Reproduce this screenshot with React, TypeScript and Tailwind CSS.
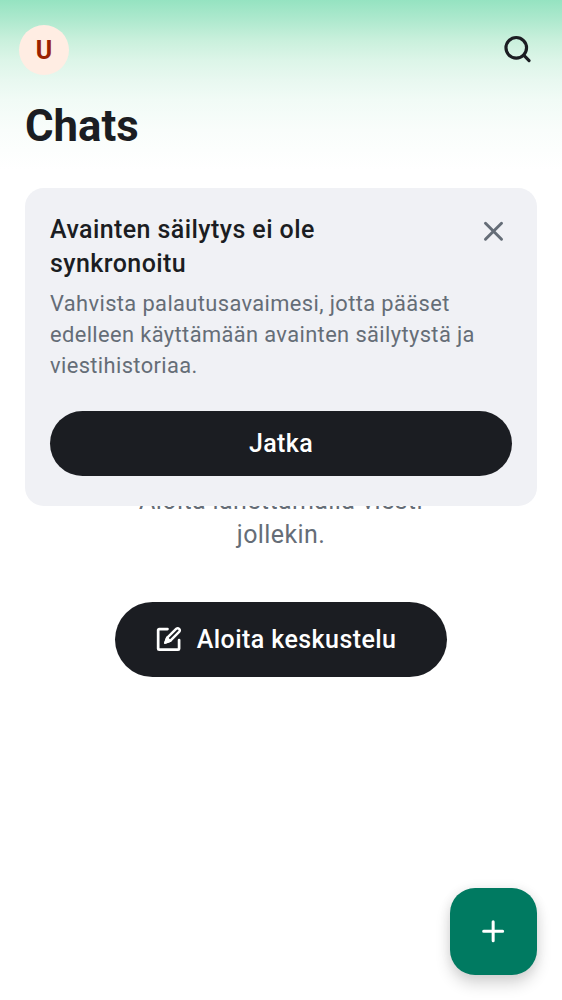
import React from "react";

function SearchIcon() {
  return (
    <svg className="size-[38px]" viewBox="0 0 24 24" fill="none" stroke="#1b1d22" strokeWidth="2" strokeLinecap="round">
      <circle cx="10.9" cy="10.6" r="6.5" />
      <path d="m15.6 15.3 3.4 3.4" />
    </svg>
  );
}

function CloseIcon() {
  return (
    <svg className="size-[31px] shrink-0" viewBox="0 0 24 24" fill="none" stroke="#656d77" strokeWidth="2.3" strokeLinecap="round">
      <path d="m5.8 5.6 12.4 12.4M18.2 5.6 5.8 18" />
    </svg>
  );
}

function ComposeIcon() {
  return (
    <svg className="size-[31px] shrink-0" viewBox="0 0 24 24" fill="none" stroke="white" strokeLinecap="round" strokeLinejoin="round">
      <path d="M11.2 3.9H4.8a.8.8 0 0 0-.8.8v14.4a.8.8 0 0 0 .8.8h14.6a.8.8 0 0 0 .8-.8v-6.7" strokeWidth="2.1" />
      <path d="m9.6 14.4 1.3-3.7 7.2-7.1a1.65 1.65 0 0 1 2.3 2.3l-7.1 7.2z" strokeWidth="1.9" />
      <path d="m9.2 14.8 1.6-4.5 2.9 2.9z" fill="white" strokeWidth="1.2" />
    </svg>
  );
}

function PlusIcon() {
  return (
    <svg className="size-[38px]" viewBox="0 0 24 24" fill="none" stroke="white" strokeWidth="1.9" strokeLinecap="round">
      <path d="M12.1 6.1v12M6.1 12.1h12" />
    </svg>
  );
}

export default function App() {
  return (
    <div className="relative flex h-[1000px] w-[562px] flex-col overflow-hidden bg-white font-['Roboto',sans-serif] text-[#1b1d22]">
      <header className="flex h-[187.5px] shrink-0 flex-col bg-[linear-gradient(to_bottom,#95e3c1_0px,#aee9ce_20px,#c9f0dc_40px,#dcf5e8_60px,#e8f8f0_80px,#f1fbf6_100px,#f9fdfb_130px,#ffffff_170px)]">
        <div className="flex h-[100px] items-center justify-between pr-[25px] pl-[19px]">
          <div className="flex size-[50px] items-center justify-center rounded-full bg-[#ffede3] pt-[2px] text-[25px] font-bold text-[#9b2200]">U</div>
          <button className="flex items-center justify-center" aria-label="Haku">
            <SearchIcon />
          </button>
        </div>
        <h1 className="pl-[25px] text-[43.7px] leading-[53px] font-bold">Chats</h1>
      </header>

      <section className="z-10 mx-[25px] flex h-[318.2px] shrink-0 flex-col rounded-[18.7px] bg-[#f0f1f5] px-[25px] pt-[25.4px]">
        <div className="flex items-start justify-between">
          <h2 className="w-[330px] text-[25px] leading-[34.6px] font-medium tracking-[0.42px]">Avainten säilytys ei ole synkronoitu</h2>
          <button className="mt-[3px] mr-[3px]" aria-label="Sulje">
            <CloseIcon />
          </button>
        </div>
        <p className="mt-[5.8px] text-[21.85px] leading-[31.2px] tracking-[0.39px] text-[#656d77]">
          Vahvista palautusavaimesi, jotta pääset edelleen käyttämään avainten säilytystä ja viestihistoriaa.
        </p>
        <button className="mt-[29.2px] flex h-[65.6px] items-center justify-center rounded-full bg-[#1b1d22] text-[25px] font-medium tracking-[0.39px] text-white">
          Jatka
        </button>
      </section>

      <main className="-mt-[22px] flex flex-col items-center">
        <p className="w-[330px] text-center text-[25px] leading-[34.35px] tracking-[0.4px] text-[#656d77]">
          Aloita lähettämällä viesti jollekin.
        </p>
        <button className="mt-[49.2px] flex h-[75px] w-[331.5px] items-center gap-[12.9px] rounded-full bg-[#1b1d22] pl-[37.7px] text-[25px] font-medium tracking-[0.42px] whitespace-nowrap text-white">
          <ComposeIcon />
          <span className="pt-px">Aloita keskustelu</span>
        </button>
      </main>

      <button
        className="absolute right-[25px] bottom-[25px] flex size-[87.5px] items-center justify-center rounded-[25px] bg-[#007a61] shadow-[0_9px_15px_rgba(0,0,0,0.16),0_0_12px_rgba(0,0,0,0.07)]"
        aria-label="Uusi keskustelu"
      >
        <PlusIcon />
      </button>
    </div>
  );
}
